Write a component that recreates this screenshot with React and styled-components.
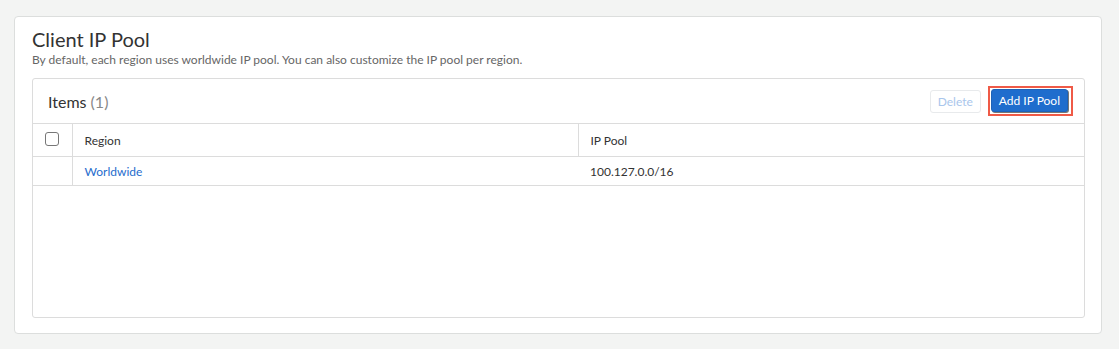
import React from 'react'
import styled, { createGlobalStyle } from 'styled-components'

const GlobalStyle = createGlobalStyle`
  body {
    margin: 0;
    background: #f3f4f3;
    font-family: Lato, "Open Sans", sans-serif;
    color: #333;
  }
`

const Page = styled.div`
  padding: 16px 17px 16px 14px;
`

const Card = styled.section`
  background: #fff;
  border: 1px solid #dcdedd;
  border-radius: 4px;
  height: 318px;
  box-sizing: border-box;
  padding: 9px 16px 15px 17px;
  display: flex;
  flex-direction: column;
`

const Title = styled.h2`
  margin: 0;
  font-size: 20px;
  font-weight: 400;
  line-height: 26px;
  color: #333;
`

const Subtitle = styled.p`
  margin: 0 0 10px;
  font-size: 12px;
  line-height: 16px;
  color: #666;
`

const Panel = styled.div`
  flex: 1;
  border: 1px solid #dcdcdc;
  border-radius: 3px;
  display: flex;
  flex-direction: column;
`

const PanelHeader = styled.div`
  height: 44px;
  display: flex;
  align-items: center;
  justify-content: space-between;
  padding: 0 11px 0 15px;
  border-bottom: 1px solid #dcdcdc;
`

const PanelTitle = styled.div`
  font-size: 16px;
  color: #333;
  span {
    color: #888;
  }
`

const Actions = styled.div`
  display: flex;
  align-items: center;
  gap: 7px;
`

const Button = styled.button`
  font-family: Lato, sans-serif;
  font-size: 12px;
  height: 23px;
  padding: 0 7px;
  border-radius: 3px;
  cursor: pointer;
  border: 1px solid ${p => (p.primary ? '#1d63b8' : '#e8eaec')};
  background: ${p => (p.primary ? '#1f6dcd' : '#fff')};
  color: ${p => (p.primary ? '#fff' : '#a9c6ec')};
`

const Highlight = styled.span`
  display: inline-flex;
  border: 2px solid #ef5a47;
  padding: 1px 3px 2px 1px;
  ${Button} {
    box-shadow: 1px 1px 0 #777;
  }
`

const Table = styled.table`
  width: 100%;
  border-collapse: collapse;
  font-size: 12px;
  table-layout: fixed;
`

const Th = styled.th`
  text-align: left;
  font-weight: 400;
  color: #333;
  height: 32px;
  padding: 0 12px;
  border-bottom: 1px solid #dcdcdc;
  border-left: 1px solid #dcdcdc;
  &:first-child {
    border-left: none;
    padding: 0;
    text-align: center;
  }
`

const Td = styled.td`
  height: 28px;
  padding: 0 12px;
  color: #333;
  border-bottom: 1px solid #dcdcdc;
  border-left: ${p => (p.noDivider ? 'none' : '1px solid #dcdcdc')};
  &:first-child {
    border-left: none;
    padding: 0;
  }
`

const Link = styled.a`
  color: #1f6dcd;
  text-decoration: none;
`

const Check = styled.span`
  display: inline-block;
  width: 12px;
  height: 12px;
  border: 1px solid #777;
  border-radius: 3px;
  vertical-align: middle;
  margin-top: -4px;
`

const rows = [{ region: 'Worldwide', pool: '100.127.0.0/16' }]

export default function App() {
  return (
    <Page>
      <GlobalStyle />
      <Card>
        <Title>Client IP Pool</Title>
        <Subtitle>
          By default, each region uses worldwide IP pool. You can also customize the IP pool per region.
        </Subtitle>
        <Panel>
          <PanelHeader>
            <PanelTitle>
              Items <span>({rows.length})</span>
            </PanelTitle>
            <Actions>
              <Button disabled>Delete</Button>
              <Highlight>
                <Button primary>Add IP Pool</Button>
              </Highlight>
            </Actions>
          </PanelHeader>
          <Table>
            <colgroup>
              <col style={{ width: 39 }} />
              <col style={{ width: 506 }} />
              <col />
            </colgroup>
            <thead>
              <tr>
                <Th><Check /></Th>
                <Th>Region</Th>
                <Th>IP Pool</Th>
              </tr>
            </thead>
            <tbody>
              {rows.map(r => (
                <tr key={r.region}>
                  <Td />
                  <Td><Link href="#">{r.region}</Link></Td>
                  <Td noDivider>{r.pool}</Td>
                </tr>
              ))}
            </tbody>
          </Table>
        </Panel>
      </Card>
    </Page>
  )
}
